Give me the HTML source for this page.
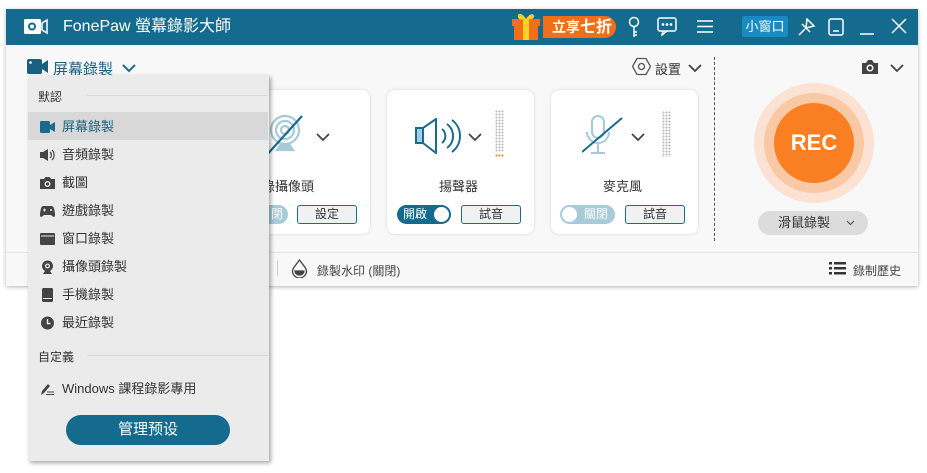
<!DOCTYPE html>
<html><head><meta charset="utf-8"><style>
*{box-sizing:border-box;margin:0;padding:0}
body{width:927px;height:473px;background:#fff;position:relative;overflow:hidden;font-family:"Liberation Sans","Noto Sans CJK TC",sans-serif;font-size:13px;color:#333}
.a{position:absolute}
.win{left:6px;top:9px;width:912px;height:277px;background:#f8f8f8;box-shadow:0 1px 4px rgba(0,0,0,.3)}
.title{left:6px;top:9px;width:912px;height:36px;background:#146b8e;color:#fff}
.card{background:#fff;border-radius:8px;box-shadow:0 0 3px rgba(0,0,0,.15)}
.btn{border:1.5px solid #1a6a8c;border-radius:3px;background:#f1f1f1;font-size:12px;text-align:center;line-height:16px;height:19px}
.dd{left:28px;top:75px;width:241px;height:386px;background:#ebebeb;box-shadow:2px 2px 4px rgba(0,0,0,.35)}
.it{left:0;width:240px;height:28px;line-height:30px;padding-left:34px;font-size:13px;color:#333}
.ic{position:absolute;left:12px;top:8px;width:15px;height:14px}
.dots{width:9px;background-image:radial-gradient(circle,#bbb 1px,transparent 1.1px);background-size:3px 3px}
</style></head><body>
<div class="a win"></div>
<div class="a title">
 <svg class="a" style="left:17px;top:9px" width="26" height="17" viewBox="0 0 26 17"><rect x="1" y="1" width="17" height="15" rx="1.5" fill="#fff"/><circle cx="9" cy="8.5" r="4" fill="#146b8e"/><circle cx="9" cy="8.5" r="2" fill="#fff"/><path d="M19 5l5-3v13l-5-3z" fill="none" stroke="#fff" stroke-width="1.5"/></svg>
 <div class="a" style="left:57px;top:8px;font-size:16px;line-height:20px">FonePaw 螢幕錄影大師</div>
 <svg class="a" style="left:506px;top:1px" width="30" height="32" viewBox="0 0 30 32"><rect x="2" y="12" width="24" height="18" fill="#f46e16"/><rect x="0" y="9" width="28" height="7" fill="#f46e16"/><rect x="11" y="9" width="6" height="21" fill="#ffd02a"/><path d="M14 9c-4-7-9-6-8-2s5 2 8 2c3 0 7 1 8-2s-4-5-8 2" fill="#ffd02a"/></svg>
 <div class="a" style="left:537px;top:7px;width:73px;height:22px;background:#f46e16;border-radius:0 11px 11px 0;font-weight:bold;font-size:14px;line-height:22px;padding-left:9px">立享<span style="font-size:16px">七折</span></div>
 <svg class="a" style="left:620px;top:7px" width="16" height="22" viewBox="0 0 16 22" fill="none" stroke="#fff" stroke-width="1.5"><circle cx="8" cy="6" r="4.5"/><path d="M8 10v11M8 16h3M8 19h3"/></svg>
 <svg class="a" style="left:651px;top:8px" width="20" height="19" viewBox="0 0 20 19" fill="none" stroke="#fff" stroke-width="1.5"><rect x="1" y="1" width="18" height="13" rx="2"/><path d="M6 14l-1 4 5-4"/><circle cx="6" cy="7.5" r=".6" fill="#fff"/><circle cx="10" cy="7.5" r=".6" fill="#fff"/><circle cx="14" cy="7.5" r=".6" fill="#fff"/></svg>
 <svg class="a" style="left:690px;top:10px" width="18" height="15" stroke="#fff" stroke-width="1.5"><path d="M1 2h16M1 7.5h16M1 13h16"/></svg>
 <div class="a" style="left:736px;top:7px;width:46px;height:21px;background:#1a8bc2;border-radius:2px;font-size:13px;line-height:21px;text-align:center">小窗口</div>
 <svg class="a" style="left:792px;top:9px" width="18" height="18" viewBox="0 0 18 18" fill="none" stroke="#fff" stroke-width="1.5"><path d="M1 17l6-6M4 6l8 8M9 1l-1 9 8-2z"/></svg>
 <svg class="a" style="left:822px;top:9px" width="16" height="18" fill="none" stroke="#fff" stroke-width="1.5"><rect x="1" y="1" width="14" height="16" rx="2"/><path d="M5 13h6"/></svg>
 <svg class="a" style="left:853px;top:10px" width="16" height="16" stroke="#fff" stroke-width="1.5"><path d="M1 15h14"/></svg>
 <svg class="a" style="left:885px;top:9px" width="16" height="16" stroke="#fff" stroke-width="1.5"><path d="M1 1l14 14M15 1L1 15"/></svg>
</div>
<svg class="a" style="left:27px;top:59px" width="22" height="15" viewBox="0 0 22 15"><rect x="0" y="0" width="15" height="15" rx="2" fill="#1a5f7f"/><path d="M15 5l6-4v13l-6-4z" fill="#1a5f7f"/><circle cx="3.5" cy="3.5" r="1.3" fill="#fff"/></svg>
<div class="a" style="left:53px;top:58px;font-size:15px;color:#1a5f7f">屏幕錄製</div>
<svg class="a" style="left:122px;top:64px" width="14" height="9" fill="none" stroke="#1a6a8c" stroke-width="2"><path d="M1 1l6 6 6-6"/></svg>
<svg class="a" style="left:632px;top:57px" width="19" height="19" viewBox="0 0 19 19" fill="none" stroke="#555" stroke-width="1.3"><path d="M5 1.5h9l4.5 8-4.5 8H5L.5 9.5z"/><circle cx="9.5" cy="9.5" r="3"/></svg>
<div class="a" style="left:655px;top:59px;font-size:13px">設置</div>
<svg class="a" style="left:688px;top:64px" width="14" height="9" fill="none" stroke="#444" stroke-width="1.8"><path d="M1 1l6 6 6-6"/></svg>
<div class="a" style="left:714px;top:57px;height:184px;border-left:1px dashed #555"></div>
<svg class="a" style="left:861px;top:59px" width="18" height="16" viewBox="0 0 18 16"><path d="M1 4h4l2-3h4l2 3h4v11H1z" fill="#444"/><circle cx="9" cy="9" r="3.5" fill="#fff"/><circle cx="9" cy="9" r="2" fill="#444"/></svg>
<svg class="a" style="left:890px;top:64px" width="14" height="9" fill="none" stroke="#444" stroke-width="1.8"><path d="M1 1l6 6 6-6"/></svg>
<div class="a" style="left:754px;top:83px;width:120px;height:120px;border-radius:50%;background:#fbe2d2"></div>
<div class="a" style="left:764px;top:93px;width:100px;height:100px;border-radius:50%;background:#f9c9a6"></div>
<div class="a" style="left:774px;top:103px;width:80px;height:80px;border-radius:50%;background:#f97f22;color:#fff;font-weight:bold;font-size:22px;line-height:80px;text-align:center">REC</div>
<div class="a" style="left:758px;top:211px;width:110px;height:24px;border-radius:12px;background:#dcdcdc;font-size:13px;line-height:24px;padding-left:20px;color:#333">滑鼠錄製</div>
<svg class="a" style="left:846px;top:220px" width="9" height="6" fill="none" stroke="#555" stroke-width="1.2"><path d="M1 1l3.5 3.5L8 1"/></svg>
<div class="a card" style="left:223px;top:90px;width:147px;height:144px"></div>
<svg class="a" style="left:260px;top:112px" width="46" height="46" viewBox="0 0 46 46" fill="none" stroke="#a6cad9" stroke-width="2.2"><circle cx="25" cy="18" r="14"/><circle cx="25" cy="18" r="9"/><circle cx="25" cy="18" r="4"/><path d="M17 38h16l-4-6h-8z" fill="#a6cad9"/><path d="M4 46L42 4" stroke="#1a6a8c"/></svg>
<svg class="a" style="left:316px;top:133px" width="14" height="9" fill="none" stroke="#444" stroke-width="1.8"><path d="M1 1l6 6 6-6"/></svg>
<div class="a" style="left:262px;top:176px;font-size:13px">錄攝像頭</div>
<div class="a" style="left:258px;top:205px;width:30px;height:19px;border-radius:10px;background:#a7cbd8;color:#fff;font-size:12px;line-height:19px;text-align:right;padding-right:5px">閉</div>
<div class="a btn" style="left:297px;top:205px;width:60px">設定</div>
<div class="a card" style="left:387px;top:90px;width:147px;height:144px"></div>
<svg class="a" style="left:415px;top:118px" width="46" height="36" viewBox="0 0 46 36" fill="none" stroke="#1a6a8c" stroke-width="2"><rect x="1" y="10" width="7" height="15" fill="#9fd0e6"/><path d="M8 10l13-9v34L8 25"/><path d="M27 11a9 9 0 010 14M32 6a15 15 0 010 24M37 2a20 20 0 010 32"/></svg>
<svg class="a" style="left:468px;top:133px" width="14" height="9" fill="none" stroke="#444" stroke-width="1.8"><path d="M1 1l6 6 6-6"/></svg>
<div class="a dots" style="left:495px;top:110px;height:42px"></div>
<div class="a" style="left:495px;top:154px;width:9px;height:3px;background-image:radial-gradient(circle,#f97f22 1px,transparent 1.1px);background-size:3px 3px"></div>
<div class="a" style="left:439px;top:176px;font-size:13px">揚聲器</div>
<div class="a" style="left:397px;top:205px;width:54px;height:19px;border-radius:10px;background:#146b8e;color:#fff;font-size:12px;line-height:19px;padding-left:6px">開啟<span style="position:absolute;right:2px;top:2px;width:15px;height:15px;border-radius:50%;background:#fff"></span></div>
<div class="a btn" style="left:461px;top:205px;width:60px">試音</div>
<div class="a card" style="left:551px;top:90px;width:147px;height:144px"></div>
<svg class="a" style="left:582px;top:114px" width="42" height="42" viewBox="0 0 42 42" fill="none" stroke="#a6cad9" stroke-width="2"><rect x="10" y="2" width="12" height="22" rx="6"/><path d="M5 18a11 11 0 0022 0M16 30v8M9 39h14"/><path d="M0 38L40 4" stroke="#1a6a8c"/></svg>
<svg class="a" style="left:631px;top:133px" width="14" height="9" fill="none" stroke="#444" stroke-width="1.8"><path d="M1 1l6 6 6-6"/></svg>
<div class="a dots" style="left:662px;top:111px;height:46px"></div>
<div class="a" style="left:603px;top:176px;font-size:13px">麥克風</div>
<div class="a" style="left:560px;top:205px;width:55px;height:19px;border-radius:10px;background:#a7cbd8;color:#fff;font-size:12px;line-height:19px;padding-left:24px">關閉<span style="position:absolute;left:2px;top:2px;width:15px;height:15px;border-radius:50%;background:#fff"></span></div>
<div class="a btn" style="left:625px;top:205px;width:60px">試音</div>
<div class="a" style="left:6px;top:252px;width:912px;border-top:1px solid #e4e4e4"></div>
<div class="a" style="left:277px;top:261px;height:15px;border-left:1px solid #ccc"></div>
<svg class="a" style="left:291px;top:259px" width="17" height="19" viewBox="0 0 17 19" fill="none" stroke="#444" stroke-width="1.3"><path d="M8.5 1C5 6 1.5 9 1.5 12a7 7 0 0014 0C15.5 9 12 6 8.5 1z"/><path d="M4 12a4.5 4 0 009 0z" fill="#444"/></svg>
<div class="a" style="left:317px;top:262px;font-size:12px;color:#444">錄製水印 (關閉)</div>
<svg class="a" style="left:829px;top:262px" width="17" height="13" fill="#333"><rect x="0" y="0" width="3" height="2.5"/><rect x="5" y="0" width="12" height="2.5"/><rect x="0" y="5" width="3" height="2.5"/><rect x="5" y="5" width="12" height="2.5"/><rect x="0" y="10" width="3" height="2.5"/><rect x="5" y="10" width="12" height="2.5"/></svg>
<div class="a" style="left:853px;top:262px;font-size:12px;color:#444">錄制歷史</div>
<div class="a dd">
 <div class="a" style="left:10px;top:13px;font-size:12px">默認</div>
 <div class="a" style="left:59px;top:20px;width:181px;border-top:1px solid #d8d8d8"></div>
 <div class="a it" style="top:37px;background:#d8d8d8;color:#1a5f7f"><svg class="ic" viewBox="0 0 15 14"><rect x="0" y="1" width="10" height="12" rx="1.5" fill="#1a6a8c"/><path d="M10 5l5-3v10l-5-3z" fill="#1a6a8c"/></svg>屏幕錄製</div>
 <div class="a it" style="top:65px"><svg class="ic" viewBox="0 0 15 14"><path d="M0 4h3l5-3v12L3 10H0z" fill="#444"/><path d="M10 4a4 4 0 010 6M12 2a7 7 0 010 10" stroke="#444" fill="none" stroke-width="1.2"/></svg>音頻錄製</div>
 <div class="a it" style="top:93px"><svg class="ic" viewBox="0 0 15 14"><path d="M0 3h4l1.5-2h4L11 3h4v10H0z" fill="#444"/><circle cx="7.5" cy="8" r="3" fill="#ebebeb"/><circle cx="7.5" cy="8" r="1.6" fill="#444"/></svg>截圖</div>
 <div class="a it" style="top:121px"><svg class="ic" viewBox="0 0 15 14"><path d="M3 2h9c2 0 3 6 3 9s-2 2-4 0H4c-2 2-4 3-4 0S1 2 3 2z" fill="#444"/><path d="M3 6h3M4.5 4.5v3" stroke="#ebebeb"/><circle cx="11" cy="6" r="1" fill="#ebebeb"/></svg>遊戲錄製</div>
 <div class="a it" style="top:149px"><svg class="ic" viewBox="0 0 15 14"><rect x="0" y="1" width="15" height="12" rx="1" fill="#444"/><path d="M1 4h13" stroke="#ebebeb"/></svg>窗口錄製</div>
 <div class="a it" style="top:177px"><svg class="ic" viewBox="0 0 15 14"><circle cx="7.5" cy="6" r="5.5" fill="#444"/><circle cx="7.5" cy="6" r="2.5" fill="#ebebeb"/><circle cx="7.5" cy="6" r="1.2" fill="#444"/><path d="M3 14l2-3h5l2 3z" fill="#444"/></svg>攝像頭錄製</div>
 <div class="a it" style="top:205px"><svg class="ic" viewBox="0 0 15 14" style="top:7px;height:16px"><rect x="2" y="0" width="11" height="14" rx="1.5" fill="#444"/><path d="M3 10.5h9" stroke="#ebebeb"/></svg>手機錄製</div>
 <div class="a it" style="top:233px"><svg class="ic" viewBox="0 0 15 14"><circle cx="7.5" cy="7" r="6.5" fill="#444"/><path d="M7.5 3v4.5h3" stroke="#ebebeb" fill="none" stroke-width="1.4"/></svg>最近錄製</div>
 <div class="a" style="left:10px;top:273px;font-size:12px">自定義</div>
 <div class="a" style="left:59px;top:280px;width:181px;border-top:1px solid #d8d8d8"></div>
 <div class="a it" style="top:299px"><svg class="ic" viewBox="0 0 15 14"><path d="M1 13l1-4 6-7 2 2-6 7z" fill="#444"/><path d="M7 10h7M6 12.5h8" stroke="#444"/></svg>Windows 課程錄影專用</div>
 <div class="a" style="left:38px;top:340px;width:164px;height:30px;border-radius:15px;background:#146b8e;color:#fff;font-size:15px;line-height:30px;text-align:center">管理预设</div>
</div>
</body></html>
